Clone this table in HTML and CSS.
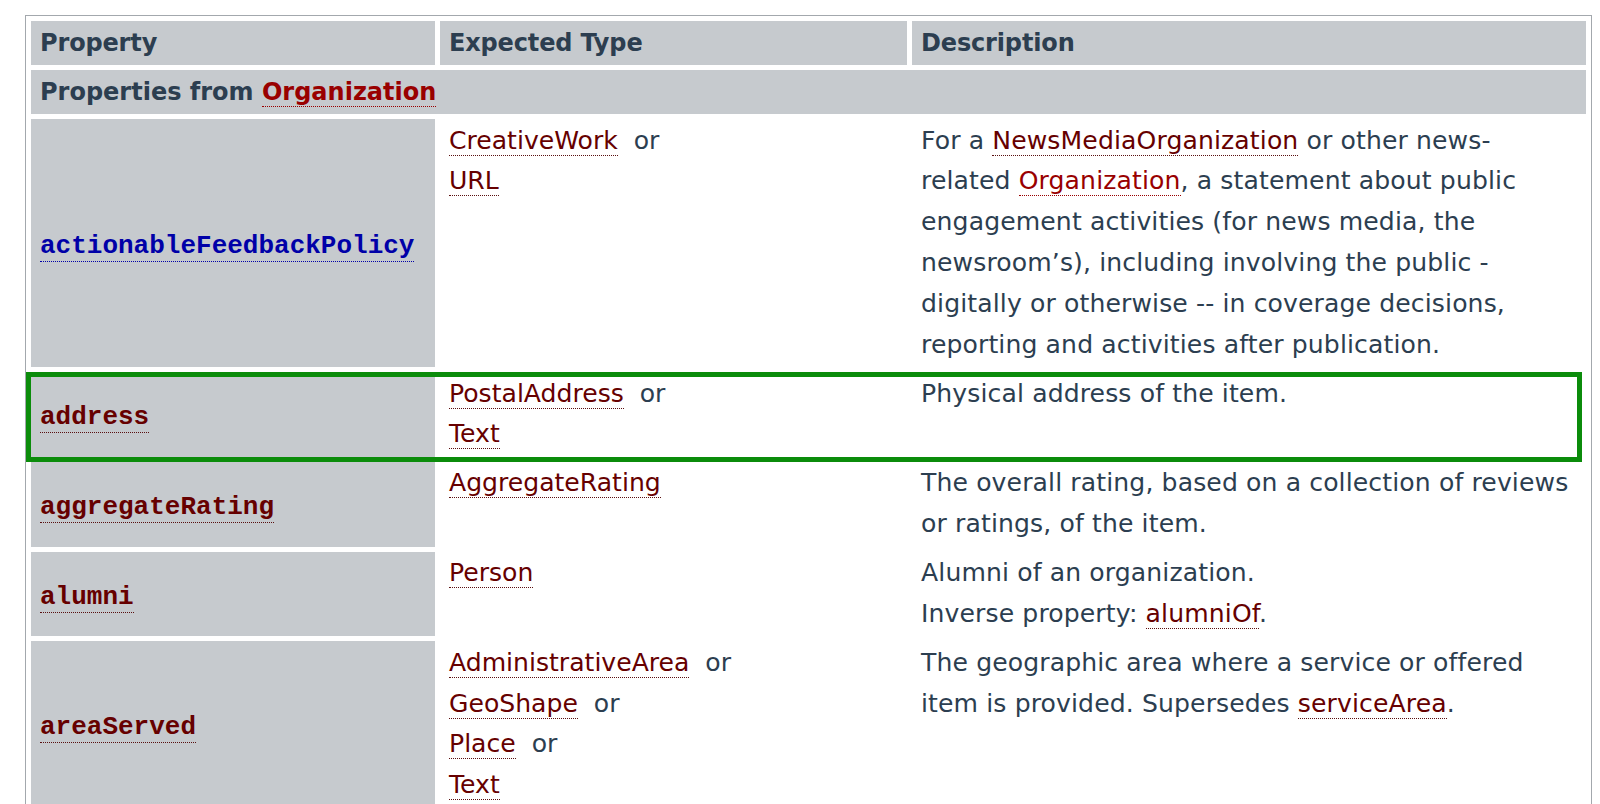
FILE: index.html
```html
<!DOCTYPE html>
<html lang="en">
<head>
<meta charset="utf-8">
<title>Organization properties</title>
<link rel="stylesheet" href="styles.css">
</head>
<body>
<div class="page">
<table class="definition-table">
  <colgroup>
    <col class="c-prop">
    <col class="c-type">
    <col class="c-desc">
  </colgroup>
  <thead>
    <tr>
      <th class="head">Property</th>
      <th class="head">Expected Type</th>
      <th class="head">Description</th>
    </tr>
  </thead>
  <tbody>
    <tr class="supertype">
      <th class="supertype-name" colspan="3">Properties from <a class="lnk lnk-bright" href="#">Organization</a></th>
    </tr>
    <tr>
      <th class="prop-nam"><code><a class="lnk prop-blue" href="#">actionableFeedbackPolicy</a></code></th>
      <td class="prop-ect"><a class="lnk" href="#">CreativeWork</a>&nbsp; or<br><a class="lnk" href="#">URL</a></td>
      <td class="prop-desc">For a <a class="lnk" href="#">NewsMediaOrganization</a> or other news-related <a class="lnk lnk-bright" href="#">Organization</a>, a statement about public engagement activities (for news media, the newsroom’s), including involving the public - digitally or otherwise -- in coverage decisions, reporting and activities after publication.</td>
    </tr>
    <tr class="highlight">
      <th class="prop-nam highlight-anchor"><code><a class="lnk" href="#">address</a></code></th>
      <td class="prop-ect"><a class="lnk" href="#">PostalAddress</a>&nbsp; or<br><a class="lnk" href="#">Text</a></td>
      <td class="prop-desc">Physical address of the item.</td>
    </tr>
    <tr>
      <th class="prop-nam"><code><a class="lnk" href="#">aggregateRating</a></code></th>
      <td class="prop-ect"><a class="lnk" href="#">AggregateRating</a></td>
      <td class="prop-desc">The overall rating, based on a collection of reviews or ratings, of the item.</td>
    </tr>
    <tr>
      <th class="prop-nam"><code><a class="lnk" href="#">alumni</a></code></th>
      <td class="prop-ect"><a class="lnk" href="#">Person</a></td>
      <td class="prop-desc">Alumni of an organization.<br>Inverse property: <a class="lnk" href="#">alumniOf</a>.</td>
    </tr>
    <tr>
      <th class="prop-nam"><code><a class="lnk" href="#">areaServed</a></code></th>
      <td class="prop-ect"><a class="lnk" href="#">AdministrativeArea</a>&nbsp; or<br><a class="lnk" href="#">GeoShape</a>&nbsp; or<br><a class="lnk" href="#">Place</a>&nbsp; or<br><a class="lnk" href="#">Text</a></td>
      <td class="prop-desc">The geographic area where a service or offered item is provided. Supersedes <a class="lnk" href="#">serviceArea</a>.</td>
    </tr>
  </tbody>
</table>
</div>
</body>
</html>
```

FILE: styles.css
```css
html, body {
  margin: 0;
  padding: 0;
  background: #ffffff;
}

.page {
  padding: 15px 0 0 25px;
  font-family: "DejaVu Sans", "Liberation Sans", sans-serif;
  color: #2c3e50;
}

.definition-table {
  width: 1567px;
  table-layout: fixed;
  border: 1px solid #a3a8ad;
  border-spacing: 5px;
  border-collapse: separate;
}

.c-prop { width: 404px; }
.c-type { width: 467px; }
.c-desc { width: auto; }

.definition-table th,
.definition-table td {
  font-size: 25.1px;
  line-height: 40.8px;
  padding: 1.6px 9px;
  text-align: left;
}

.head,
.supertype-name {
  background: #c6cace;
  font-size: 24px !important;
  font-weight: bold;
  color: #2c3e50;
  vertical-align: middle;
}

.head {
  letter-spacing: -0.15px;
}

.definition-table .prop-nam {
  background: #c6cace;
  vertical-align: middle;
  font-weight: normal;
  padding-top: 7px;
}

.prop-nam code {
  font-family: "Liberation Mono", "DejaVu Sans Mono", monospace;
  font-weight: bold;
  font-size: 26px;
}

.prop-ect,
.prop-desc {
  vertical-align: top;
  background: #ffffff;
}

.definition-table .prop-desc {
  padding-right: 16px;
  letter-spacing: 0.12px;
}

.lnk {
  color: #660000;
  text-decoration: none;
  border-bottom: 1px dotted #5a1010;
}

.lnk-bright {
  color: #990000;
  border-bottom-color: #990000;
}

.prop-blue {
  color: #0000a8;
  border-bottom-color: #0000a8;
}

/* green "current row" frame, drawn over the row */
.highlight-anchor {
  position: relative;
}

.highlight-anchor::after {
  content: "";
  position: absolute;
  left: -5px;
  top: 0;
  bottom: -5px;
  width: 1556px;
  box-sizing: border-box;
  border: 5px solid #0b8c0b;
  pointer-events: none;
}
```
